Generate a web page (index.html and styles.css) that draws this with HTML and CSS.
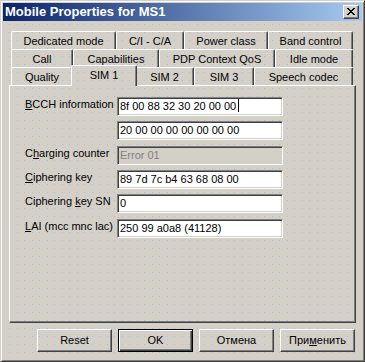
FILE: index.html
```html
<!DOCTYPE html>
<html lang="ru">
<head>
    <meta charset="UTF-8">
    <title>Mobile Properties for MS1</title>
    <link rel="stylesheet" href="styles.css">
</head>
<body>
    <div class="window">
        <div class="titlebar">
            <span class="title">Mobile Properties for MS1</span>
            <span class="close-btn">
                <svg width="8" height="7" viewBox="0 0 8 7">
                    <path d="M0 0h2v1h-2zM6 0h2v1h-2zM1 1h2v1h-2zM5 1h2v1h-2zM2 2h4v1h-4zM3 3h2v1h-2zM2 4h4v1h-4zM1 5h2v1h-2zM5 5h2v1h-2zM0 6h2v1h-2zM6 6h2v1h-2z" fill="#000"/>
                </svg>
            </span>
        </div>
        <div class="client grid">
            <div class="tabs">
                <div class="tab-row">
                    <div class="tab t-dedicated">Dedicated mode</div>
                    <div class="tab t-ci">C/I - C/A</div>
                    <div class="tab t-power">Power class</div>
                    <div class="tab t-band">Band control</div>
                </div>
                <div class="tab-row">
                    <div class="tab t-call">Call</div>
                    <div class="tab t-caps">Capabilities</div>
                    <div class="tab t-pdp">PDP Context QoS</div>
                    <div class="tab t-idle">Idle mode</div>
                </div>
                <div class="tab-row">
                    <div class="tab t-quality">Quality</div>
                    <div class="tab t-sim1 selected grid">SIM 1</div>
                    <div class="tab t-sim2">SIM 2</div>
                    <div class="tab t-sim3">SIM 3</div>
                    <div class="tab t-speech">Speech codec</div>
                </div>
            </div>

            <div class="panel">
                <div class="field">
                    <label><u>B</u>CCH information</label>
                    <div class="edit">8f 00 88 32 30 20 00 00<span class="caret"></span></div>
                </div>
                <div class="field">
                    <label></label>
                    <div class="edit">20 00 00 00 00 00 00 00</div>
                </div>
                <div class="field wide">
                    <label>C<u>h</u>arging counter</label>
                    <div class="edit disabled">Error 01</div>
                </div>
                <div class="field">
                    <label><u>C</u>iphering key</label>
                    <div class="edit">89 7d 7c b4 63 68 08 00</div>
                </div>
                <div class="field">
                    <label>Ciphering <u>k</u>ey SN</label>
                    <div class="edit">0</div>
                </div>
                <div class="field wide">
                    <label><u>L</u>AI (mcc mnc lac)</label>
                    <div class="edit">250 99 a0a8 (41128)</div>
                </div>
            </div>

            <div class="buttons">
                <div class="btn">Reset</div>
                <div class="btn default">OK</div>
                <div class="btn">Отмена</div>
                <div class="btn">При<u>м</u>енить</div>
            </div>
        </div>
    </div>
</body>
</html>
```

FILE: styles.css
```css
body {
    margin: 0;
    font-family: 'Liberation Sans', Arial, sans-serif;
    font-size: 11px;
    color: #000;
    background: #d4d0c8;
}
.window {
    width: 365px;
    height: 362px;
    box-sizing: border-box;
    background: #d4d0c8;
    border-top: 1px solid #d4d0c8;
    border-left: 1px solid #d4d0c8;
    border-right: 1px solid #404040;
    border-bottom: 1px solid #404040;
    box-shadow: inset 1px 1px #fff, inset -1px -1px #808080;
    padding: 2px;
    display: flex;
    flex-direction: column;
}
.titlebar {
    height: 18px;
    display: flex;
    align-items: flex-start;
    justify-content: space-between;
    background: linear-gradient(to right, #0a246a, #a6caf0);
}
.title {
    color: #fff;
    font-weight: bold;
    font-size: 13px;
    line-height: 18px;
    padding-left: 2px;
}
.close-btn {
    width: 16px;
    height: 14px;
    box-sizing: border-box;
    margin: 2px 3px 0 0;
    background: #d4d0c8;
    border-top: 1px solid #fff;
    border-left: 1px solid #fff;
    border-right: 1px solid #404040;
    border-bottom: 1px solid #404040;
    box-shadow: inset -1px -1px #808080;
    display: flex;
    align-items: center;
    justify-content: center;
    padding: 0 1px 1px 0;
}
.close-btn svg {
    display: block;
}
/* dialog editor grid: one dot every 7.5 x 8 px */
.grid {
    background-color: #d4d0c8;
    background-image:
        conic-gradient(from 270deg at 1px 1px, #9cc2ec 0 25%, transparent 0),
        conic-gradient(from 270deg at 1px 1px, #9cc2ec 0 25%, transparent 0);
    background-size: 15px 8px;
    background-position: 2px 0, 9px 0;
    background-attachment: fixed;
}
.client {
    flex: 1;
    padding: 10px 6px 0 6px;
    display: flex;
    flex-direction: column;
}
.tabs {
    margin-left: 2px;
    width: 342px;
}
.tab-row {
    display: flex;
    height: 18px;
}
.tab {
    height: 18px;
    box-sizing: border-box;
    border-top: 1px solid #fff;
    border-left: 1px solid #fff;
    border-right: 1px solid #404040;
    box-shadow: inset -1px 0 #808080;
    border-radius: 2px 2px 0 0;
    text-align: center;
    line-height: 16px;
    padding-top: 1px;
    white-space: nowrap;
}
.tab.selected {
    position: relative;
    z-index: 1;
    height: 21px;
    margin: -2px -2px -1px -2px;
}
.t-dedicated { width: 105px; }
.t-ci { width: 68px; }
.t-power { width: 84px; }
.t-band { width: 85px; }
.t-call { width: 62px; }
.t-caps { width: 86px; }
.t-pdp { width: 116px; }
.t-idle { width: 78px; }
.t-quality { width: 62px; }
.t-sim1 { width: 66px; }
.t-sim2 { width: 59px; }
.t-sim3 { width: 60px; }
.t-speech { width: 99px; }
.panel {
    height: 238px;
    box-sizing: border-box;
    border-top: 1px solid #fff;
    border-left: 1px solid #fff;
    border-right: 1px solid #404040;
    border-bottom: 1px solid #404040;
    box-shadow: inset -1px -1px #808080;
    padding: 11px 0 0 15px;
}
.field {
    display: flex;
    height: 19px;
    margin-top: 5px;
}
.field:first-child {
    margin-top: 0;
}
.field.wide {
    margin-top: 6px;
}
.field label {
    width: 92px;
    padding-top: 1px;
    line-height: 13px;
}
.edit {
    width: 166px;
    height: 19px;
    box-sizing: border-box;
    background: #fff;
    border-top: 1px solid #808080;
    border-left: 1px solid #808080;
    border-right: 1px solid #fff;
    border-bottom: 1px solid #fff;
    box-shadow: inset 1px 1px #404040, inset -1px -1px #d4d0c8;
    padding: 1px 2px 0 2px;
    line-height: 15px;
    white-space: nowrap;
}
.edit.disabled {
    background: #d4d0c8;
    color: #808080;
}
.caret {
    display: inline-block;
    width: 1px;
    height: 13px;
    background: #000;
    margin-left: 2px;
    vertical-align: -2px;
}
.buttons {
    display: flex;
    justify-content: flex-end;
    gap: 6px;
    margin-top: 6px;
    padding-right: 1px;
}
.btn {
    width: 75px;
    height: 23px;
    box-sizing: border-box;
    border-top: 1px solid #fff;
    border-left: 1px solid #fff;
    border-right: 1px solid #404040;
    border-bottom: 1px solid #404040;
    box-shadow: inset -1px -1px #808080;
    text-align: center;
    line-height: 20px;
}
.btn.default {
    border: 1px solid #000;
    box-shadow: inset 1px 1px #fff, inset -1px -1px #404040, inset -2px -2px #808080;
}
```
